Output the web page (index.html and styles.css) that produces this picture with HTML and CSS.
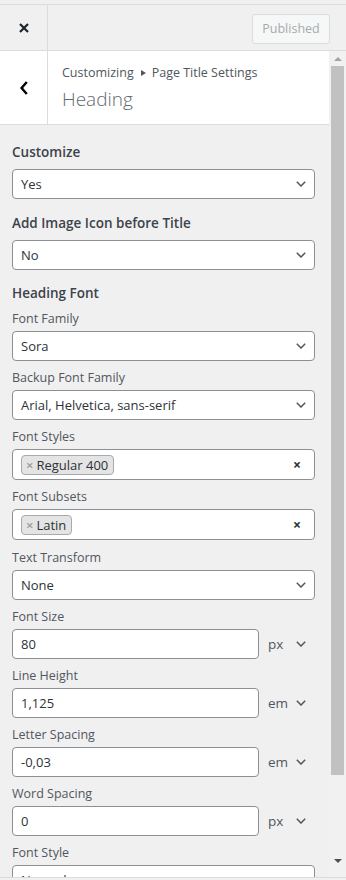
FILE: index.html
```html
<!DOCTYPE html>
<html lang="en">
<head>
<meta charset="utf-8">
<title>Customizer – Heading</title>
<link rel="stylesheet" href="styles.css">
</head>
<body>
<div class="app">
  <header class="topbar">
    <button class="close-btn" aria-label="Close">
      <svg width="10" height="10" viewBox="0 0 10 10"><path d="M1 1 L9 9 M9 1 L1 9" stroke="#1d2327" stroke-width="2.2" stroke-linecap="butt" fill="none"/></svg>
    </button>
    <div class="topbar-fill"></div>
    <button class="published-btn" disabled>Published</button>
  </header>
  <div class="main">
    <div class="panel">
      <div class="section-head">
        <button class="back-btn" aria-label="Back">
          <svg width="8" height="14" viewBox="0 0 8 14"><path d="M6.8 1 L1.6 7 L6.8 13" stroke="#000" stroke-width="2.4" fill="none"/></svg>
        </button>
        <div class="section-titles">
          <div class="crumbs">Customizing <span class="crumb-arrow"></span> Page Title Settings</div>
          <h1 class="section-title">Heading</h1>
        </div>
      </div>
      <div class="content">
        <div class="control control-top">
          <div class="ctl-title">Customize</div>
          <div class="select"><span class="val">Yes</span><span class="chev"></span></div>
        </div>
        <div class="control control-top">
          <div class="ctl-title">Add Image Icon before Title</div>
          <div class="select"><span class="val">No</span><span class="chev"></span></div>
        </div>
        <div class="ctl-title group-title">Heading Font</div>
        <div class="fields">
          <div class="field">
            <div class="lbl">Font Family</div>
            <div class="select"><span class="val">Sora</span><span class="chev"></span></div>
          </div>
          <div class="field">
            <div class="lbl">Backup Font Family</div>
            <div class="select"><span class="val">Arial, Helvetica, sans-serif</span><span class="chev"></span></div>
          </div>
          <div class="field">
            <div class="lbl">Font Styles</div>
            <div class="multi"><span class="tag"><span class="tag-x">×</span>Regular 400</span><span class="clear">×</span></div>
          </div>
          <div class="field">
            <div class="lbl">Font Subsets</div>
            <div class="multi"><span class="tag"><span class="tag-x">×</span>Latin</span><span class="clear">×</span></div>
          </div>
          <div class="field field-after-multi">
            <div class="lbl">Text Transform</div>
            <div class="select"><span class="val">None</span><span class="chev"></span></div>
          </div>
          <div class="field">
            <div class="lbl">Font Size</div>
            <div class="unit-row"><div class="input">80</div><span class="unit">px</span><span class="chev"></span></div>
          </div>
          <div class="field">
            <div class="lbl">Line Height</div>
            <div class="unit-row"><div class="input">1,125</div><span class="unit">em</span><span class="chev"></span></div>
          </div>
          <div class="field">
            <div class="lbl">Letter Spacing</div>
            <div class="unit-row"><div class="input">-0,03</div><span class="unit">em</span><span class="chev"></span></div>
          </div>
          <div class="field">
            <div class="lbl">Word Spacing</div>
            <div class="unit-row"><div class="input">0</div><span class="unit">px</span><span class="chev"></span></div>
          </div>
          <div class="field">
            <div class="lbl">Font Style</div>
            <div class="select"><span class="val">Normal</span><span class="chev"></span></div>
          </div>
        </div>
      </div>
    </div>
    <div class="scrollbar">
      <span class="sb-up"></span>
      <div class="sb-track"><div class="sb-thumb"></div></div>
      <span class="sb-down"></span>
    </div>
  </div>
</div>
</body>
</html>
```
FILE: styles.css
```css
* { box-sizing: border-box; }
html, body { margin: 0; padding: 0; }
body {
  background: #f0f0f1;
  font-family: "Open Sans", "Noto Sans", sans-serif;
  color: #50575e;
  width: 346px;
  height: 880px;
  overflow: hidden;
}
.app {
  padding-top: 4px;
  height: 880px;
  display: flex;
  flex-direction: column;
}
button { font-family: inherit; }

/* top bar */
.topbar {
  display: flex;
  align-items: center;
  height: 47px;
  border-top: 1px solid #dcdcde;
  border-bottom: 1px solid #dcdcde;
  background: #f0f0f1;
}
.close-btn {
  width: 48px;
  height: 45px;
  border: 0;
  border-right: 1px solid #dcdcde;
  background: transparent;
  display: flex;
  align-items: center;
  justify-content: center;
  padding: 0 0 0 1px;
}
.topbar-fill { flex: 1; }
.published-btn {
  width: 78px;
  height: 30px;
  margin-right: 16px;
  margin-top: 2px;
  background: #f6f7f7;
  border: 1px solid #dcdcde;
  border-radius: 3px;
  color: #a7aaad;
  font-size: 12.5px;
  padding: 0;
}

/* main */
.main {
  display: flex;
  height: 827px;
  border-bottom: 1px solid #dcdcde;
}
.panel {
  flex: 1;
  display: flex;
  flex-direction: column;
  overflow: hidden;
}
.section-head {
  display: flex;
  height: 74px;
  flex: 0 0 74px;
  background: #fff;
  border-bottom: 1px solid #dcdcde;
}
.back-btn {
  width: 48px;
  border: 0;
  border-right: 1px solid #dcdcde;
  background: transparent;
  display: flex;
  align-items: center;
  justify-content: center;
  padding: 1px 0 0 0;
}
.section-titles {
  padding: 13px 0 0 14px;
}
.crumbs {
  font-size: 12.5px;
  line-height: 18px;
  color: #50575e;
  display: flex;
  align-items: center;
  white-space: nowrap;
}
.crumb-arrow {
  display: inline-block;
  width: 0; height: 0;
  border-left: 5px solid #50575e;
  border-top: 3px solid transparent;
  border-bottom: 3px solid transparent;
  margin: 0 6px 0 7px;
}
.section-title {
  margin: 4px 0 0;
  font-size: 19px;
  line-height: 26px;
  font-weight: 300;
  color: #646970;
}

/* content */
.content {
  flex: 1;
  padding: 16px 14px 0 12px;
}
.ctl-title {
  font-size: 13.5px;
  font-weight: 600;
  line-height: 22px;
  color: #3c434a;
  margin-bottom: 6px;
}
.control { margin-bottom: 13px; }
.group-title { margin-top: -1px; margin-bottom: 6px; }
.fields {
  display: flex;
  flex-direction: column;
  gap: 8px;
}
.field-after-multi { margin-top: 1px; }
.lbl {
  font-size: 12.5px;
  line-height: 18px;
  color: #50575e;
  margin-bottom: 3px;
}
.select, .multi, .input {
  height: 30px;
  border: 1px solid #8c8f94;
  border-radius: 4px;
  background: #fff;
  display: flex;
  align-items: center;
  font-size: 13px;
  color: #2c3338;
}
.select { padding: 0 8px 0 8px; }
.select .val { flex: 1; white-space: nowrap; }
.chev {
  width: 10px;
  height: 10px;
  flex: 0 0 10px;
  background: no-repeat center / 10px 6px url("data:image/svg+xml;utf8,<svg xmlns='http://www.w3.org/2000/svg' width='10' height='6' viewBox='0 0 10 6'><path d='M0.8 0.8 L5 5 L9.2 0.8' stroke='%2350575e' stroke-width='1.5' fill='none'/></svg>");
}
.multi { height: 31px; padding: 0 8px 0 8px; }
.tag {
  display: inline-flex;
  align-items: center;
  height: 20px;
  padding: 0 5px 0 4px;
  background: #e4e4e4;
  border: 1px solid #aaa;
  border-radius: 4px;
  font-size: 13px;
  color: #2c3338;
  line-height: 18px;
}
.tag-x {
  color: #999;
  font-size: 13px;
  font-weight: 600;
  margin-right: 3px;
}
.clear {
  margin-left: auto;
  margin-right: 5px;
  font-weight: 700;
  font-size: 14px;
  color: #2c3338;
}
.unit-row {
  display: flex;
  align-items: center;
}
.input {
  width: 247px;
  padding: 0 8px;
}
.unit {
  font-size: 13.5px;
  color: #50575e;
  margin-left: 9px;
  width: 28px;
}

/* scrollbar */
.scrollbar {
  width: 17px;
  flex: 0 0 17px;
  background: #f1f1f1;
  display: flex;
  flex-direction: column;
  align-items: center;
}
.sb-up, .sb-down {
  width: 0; height: 0;
  border-left: 4px solid transparent;
  border-right: 4px solid transparent;
  display: block;
}
.sb-up { border-bottom: 4px solid #a3a3a3; margin-top: 6px; margin-bottom: 5px; }
.sb-down { border-top: 4px solid #505050; margin-bottom: 14px; }
.sb-track { flex: 1; width: 100%; display: flex; justify-content: center; }
.sb-thumb { width: 13px; height: 709px; background: #c1c1c1; }
```
